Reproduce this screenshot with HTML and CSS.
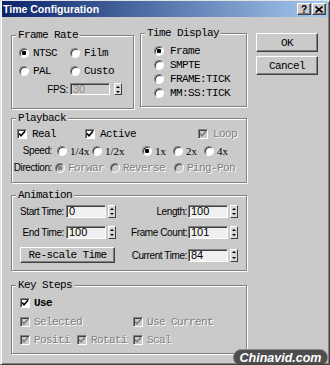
FILE: index.html
```html
<!DOCTYPE html>
<html lang="en">
<head>
  <meta charset="UTF-8">
  <meta name="viewport" content="width=device-width, initial-scale=1.0">
  <title>Time Configuration</title>
  <link rel="stylesheet" href="styles.css">
</head>
<body>
  <div class="window">
    <div class="titlebar">
      <span class="title-text">Time Configuration</span>
      <div class="caption-buttons">
        <span class="caption-btn">?</span>
        <span class="caption-btn">
          <svg width="8" height="7" viewBox="0 0 8 7"><path d="M0.5 0.5l7 6M7.5 0.5l-7 6" /></svg>
        </span>
      </div>
    </div>

    <div class="dialog">
      <div class="main">
        <div class="top-row">
          <div class="group frame-rate">
            <span class="group-title">Frame Rate</span>
            <div class="radio-grid">
              <span class="opt"><span class="radio on"></span>NTSC</span>
              <span class="opt"><span class="radio"></span>Film</span>
              <span class="opt"><span class="radio"></span>PAL</span>
              <span class="opt"><span class="radio"></span>Custo</span>
            </div>
            <div class="field fps">
              <span class="field-label">FPS:</span>
              <span class="input disabled">30</span>
              <span class="spin"><i></i><i></i></span>
            </div>
          </div>

          <div class="group time-display">
            <span class="group-title">Time Display</span>
            <div class="radio-list">
              <span class="opt"><span class="radio on"></span>Frame</span>
              <span class="opt"><span class="radio"></span>SMPTE</span>
              <span class="opt"><span class="radio"></span>FRAME:TICK</span>
              <span class="opt"><span class="radio"></span>MM:SS:TICK</span>
            </div>
          </div>
        </div>

        <div class="group playback">
          <span class="group-title">Playback</span>
          <div class="pb-rows">
            <div class="row checks">
              <span class="opt"><span class="check"><svg viewBox="0 0 8 8"><path d="M1 3.5l2 2.2 4-4.4" /></svg></span>Real</span>
              <span class="opt"><span class="check"><svg viewBox="0 0 8 8"><path d="M1 3.5l2 2.2 4-4.4" /></svg></span>Active</span>
              <span class="opt off"><span class="check"><svg viewBox="0 0 8 8"><path d="M1 3.5l2 2.2 4-4.4" /></svg></span>Loop</span>
            </div>
            <div class="row speed">
              <span class="row-label">Speed:</span>
              <span class="opt"><span class="radio"></span>1/4x</span>
              <span class="opt"><span class="radio"></span>1/2x</span>
              <span class="opt"><span class="radio on"></span>1x</span>
              <span class="opt"><span class="radio"></span>2x</span>
              <span class="opt"><span class="radio"></span>4x</span>
            </div>
            <div class="row direction">
              <span class="row-label">Direction:</span>
              <span class="opt off"><span class="radio on"></span>Forwar</span>
              <span class="opt off"><span class="radio"></span>Reverse</span>
              <span class="opt off"><span class="radio"></span>Ping-Pon</span>
            </div>
          </div>
        </div>

        <div class="group animation">
          <span class="group-title">Animation</span>
          <div class="anim-grid">
            <div class="field">
              <span class="field-label">Start Time:</span>
              <span class="input">0</span>
              <span class="spin"><i></i><i></i></span>
            </div>
            <div class="field wide">
              <span class="field-label">Length:</span>
              <span class="input">100</span>
              <span class="spin"><i></i><i></i></span>
            </div>
            <div class="field">
              <span class="field-label">End Time:</span>
              <span class="input">100</span>
              <span class="spin"><i></i><i></i></span>
            </div>
            <div class="field wide">
              <span class="field-label">Frame Count:</span>
              <span class="input">101</span>
              <span class="spin"><i></i><i></i></span>
            </div>
            <button class="btn rescale">Re-scale Time</button>
            <div class="field wide">
              <span class="field-label">Current Time:</span>
              <span class="input">84</span>
              <span class="spin"><i></i><i></i></span>
            </div>
          </div>
        </div>

        <div class="group key-steps">
          <span class="group-title">Key Steps</span>
          <div class="ks-rows">
            <div class="ks-row">
              <span class="opt strong"><span class="check"><svg viewBox="0 0 8 8"><path d="M1 3.5l2 2.2 4-4.4" /></svg></span>Use</span>
            </div>
            <div class="ks-row two">
              <span class="opt off"><span class="check"><svg viewBox="0 0 8 8"><path d="M1 3.5l2 2.2 4-4.4" /></svg></span>Selected</span>
              <span class="opt off"><span class="check"><svg viewBox="0 0 8 8"><path d="M1 3.5l2 2.2 4-4.4" /></svg></span>Use Current</span>
            </div>
            <div class="ks-row three">
              <span class="opt off"><span class="check"><svg viewBox="0 0 8 8"><path d="M1 3.5l2 2.2 4-4.4" /></svg></span>Positi</span>
              <span class="opt off"><span class="check"><svg viewBox="0 0 8 8"><path d="M1 3.5l2 2.2 4-4.4" /></svg></span>Rotati</span>
              <span class="opt off"><span class="check"><svg viewBox="0 0 8 8"><path d="M1 3.5l2 2.2 4-4.4" /></svg></span>Scal</span>
            </div>
          </div>
        </div>
      </div>

      <div class="side">
        <button class="btn">OK</button>
        <button class="btn">Cancel</button>
      </div>
    </div>

    <div class="watermark">Chinavid.com</div>
  </div>
</body>
</html>
```

FILE: styles.css
```css
body {
  margin: 0;
  background: #cacaca;
}

.window {
  position: relative;
  width: 330px;
  height: 365px;
  box-sizing: border-box;
  padding: 0 1px;
  background: #cacaca;
  border: 1px solid;
  border-color: #e4e4e4 #404040 #404040 #e4e4e4;
  box-shadow: inset 1px 1px 0 #fff, inset -1px -1px 0 #808080;
  font-family: "Liberation Mono", monospace;
  font-size: 11px;
  letter-spacing: -0.6px;
  color: #000;
  overflow: hidden;
}

/* title bar */
.titlebar {
  height: 16px;
  display: flex;
  align-items: center;
  justify-content: space-between;
  padding: 0 2px 0 1px;
  background: linear-gradient(90deg, #0a246a, #a6caf0);
}

.title-text {
  font: bold 10.5px "Liberation Sans", sans-serif;
  letter-spacing: 0;
  color: #fff;
}

.caption-buttons {
  display: flex;
  gap: 1px;
}

.caption-btn {
  width: 14px;
  height: 12px;
  box-sizing: border-box;
  display: flex;
  align-items: center;
  justify-content: center;
  background: #cacaca;
  border: 1px solid;
  border-color: #fff #404040 #404040 #fff;
  box-shadow: inset -1px -1px 0 #808080;
  font: bold 10px "Liberation Sans", sans-serif;
  letter-spacing: 0;
}

.caption-btn svg {
  stroke: #000;
  stroke-width: 1.6;
  fill: none;
}

/* layout */
.dialog {
  display: flex;
  align-items: flex-start;
  padding-left: 9px;
}

.main {
  width: 236px;
}

.top-row {
  display: flex;
  align-items: flex-start;
  gap: 6px;
  margin-top: 16px;
}

.side {
  display: flex;
  flex-direction: column;
  gap: 4px;
  margin: 16px 0 0 9px;
}

/* group boxes */
.group {
  box-sizing: border-box;
  border: 1px solid #808080;
  box-shadow: inset 1px 1px 0 #fff, 1px 1px 0 #fff;
}

.group-title {
  display: table;
  margin: -7px 0 0 4px;
  padding: 0 2px;
  line-height: 12px;
  background: #cacaca;
}

.frame-rate {
  width: 123px;
  height: 74px;
  margin-top: 2px;
}

.time-display {
  width: 107px;
  height: 74px;
}

.playback {
  height: 65px;
  margin-top: 9px;
}

.animation {
  height: 76px;
  margin-top: 12px;
}

.key-steps {
  height: 69px;
  margin-top: 14px;
}

/* options */
.opt {
  display: flex;
  align-items: center;
  gap: 4px;
  white-space: nowrap;
}

.off {
  color: #808080;
  text-shadow: 1px 1px 0 #fff;
}

.strong {
  font-weight: bold;
}

.radio {
  flex: none;
  width: 10px;
  height: 10px;
  box-sizing: border-box;
  border-radius: 50%;
  border: 1px solid;
  border-color: #808080 #fff #fff #808080;
  box-shadow: inset 1px 1px 0 #404040;
  background: #fff;
}

.radio.on {
  background: radial-gradient(circle, #000 0 2px, #fff 2.5px);
}

.off .radio {
  background: #cacaca;
}

.off .radio.on {
  background: radial-gradient(circle, #808080 0 2px, #cacaca 2.5px);
}

.check {
  flex: none;
  width: 10px;
  height: 10px;
  box-sizing: border-box;
  border: 1px solid;
  border-color: #808080 #fff #fff #808080;
  box-shadow: inset 1px 1px 0 #404040;
  background: #fff;
  display: flex;
}

.check svg {
  width: 8px;
  height: 8px;
  fill: none;
  stroke: #000;
  stroke-width: 1.7;
}

.off .check {
  background: #cacaca;
}

.off .check svg {
  stroke: #808080;
}

.radio-grid {
  display: grid;
  grid-template-columns: 51px auto;
  grid-auto-rows: 18px;
  align-items: center;
  padding: 3px 0 0 7px;
}

.radio-list {
  display: grid;
  grid-auto-rows: 14px;
  align-items: center;
  padding: 5px 0 0 13px;
}

.time-display .opt {
  gap: 6px;
}

/* playback rows */
.pb-rows {
  padding-top: 1px;
}

.row {
  display: grid;
  height: 17px;
  align-items: center;
}

.row.checks {
  grid-template-columns: 68px 113px auto;
  padding-left: 5px;
}

.row.speed {
  grid-template-columns: 45px 35px 50px 31px 31px auto;
}

.row.speed .opt {
  font: 11px "Liberation Serif", serif;
  letter-spacing: 0;
}

.row.direction {
  grid-template-columns: 43px 55px 64px auto;
}

.row .opt {
  gap: 3px;
}

.row.checks .opt {
  gap: 5px;
}

.row-label {
  font: 10px "Liberation Sans", sans-serif;
  letter-spacing: -0.4px;
  text-align: right;
  white-space: nowrap;
}

.speed .row-label {
  padding-right: 5px;
}

.direction .row-label {
  padding-right: 3px;
}

/* fields */
.field {
  display: flex;
  align-items: center;
}

.field-label {
  font: 10px "Liberation Sans", sans-serif;
  letter-spacing: -0.4px;
  text-align: right;
  white-space: nowrap;
}

.input {
  width: 40px;
  height: 13px;
  box-sizing: border-box;
  padding-left: 2px;
  border: 1px solid;
  border-color: #808080 #fff #fff #808080;
  box-shadow: inset 1px 1px 0 #404040;
  background: #f0f0f0;
  font: 11px "Liberation Sans", sans-serif;
  letter-spacing: 0;
  line-height: 11px;
}

.input.disabled {
  background: #cacaca;
  color: #909090;
}

.spin {
  width: 8px;
  height: 13px;
  box-sizing: border-box;
  display: flex;
  flex-direction: column;
  margin-left: 2px;
  border: 1px solid;
  border-color: #fff #404040 #404040 #fff;
  background: #d8d8d8;
}

.spin i {
  flex: 1;
  display: flex;
  align-items: center;
  justify-content: center;
}

.spin i::before {
  content: "";
  border-left: 2px solid transparent;
  border-right: 2px solid transparent;
}

.spin i:first-child::before {
  border-bottom: 2px solid #000;
}

.spin i:last-child::before {
  border-top: 2px solid #000;
}

.fps {
  height: 18px;
  padding-left: 7px;
}

.fps .field-label {
  width: 49px;
  margin-right: 2px;
}

.fps .spin {
  height: 12px;
  margin-left: 4px;
}

.fps .input {
  height: 12px;
}

.anim-grid {
  display: grid;
  grid-template-columns: 96px 107px;
  grid-template-rows: 13px 13px 16px;
  column-gap: 15px;
  row-gap: 8px;
  align-items: center;
  padding: 4px 0 0 8px;
}

.anim-grid .field-label {
  width: 44px;
  margin-right: 2px;
}

.anim-grid .wide .field-label {
  width: 56px;
  margin-right: 1px;
}

/* buttons */
.btn {
  width: 62px;
  height: 19px;
  box-sizing: border-box;
  padding: 0;
  display: flex;
  align-items: center;
  justify-content: center;
  background: #cacaca;
  border: 1px solid;
  border-color: #fff #404040 #404040 #fff;
  box-shadow: inset -1px -1px 0 #808080;
  font: inherit;
  letter-spacing: inherit;
  color: #000;
}

.btn.rescale {
  width: 95px;
  height: 16px;
}

/* key steps */
.ks-rows {
  padding: 2px 0 0 8px;
}

.ks-row {
  display: grid;
  height: 19px;
  align-items: center;
}

.ks-row.two {
  grid-template-columns: 113px auto;
}

.ks-row.three {
  grid-template-columns: 57px 56px auto;
  height: 18px;
}

/* watermark over the corner */
.watermark {
  position: absolute;
  right: 1px;
  bottom: -2px;
  width: 95px;
  height: 17px;
  box-sizing: border-box;
  border-radius: 8px;
  border: 1px solid #8a8a8a;
  background: #4e4e4e;
  display: flex;
  align-items: center;
  justify-content: center;
  color: #fff;
  font: italic bold 12.5px "Liberation Sans", sans-serif;
  letter-spacing: 0;
}
```
